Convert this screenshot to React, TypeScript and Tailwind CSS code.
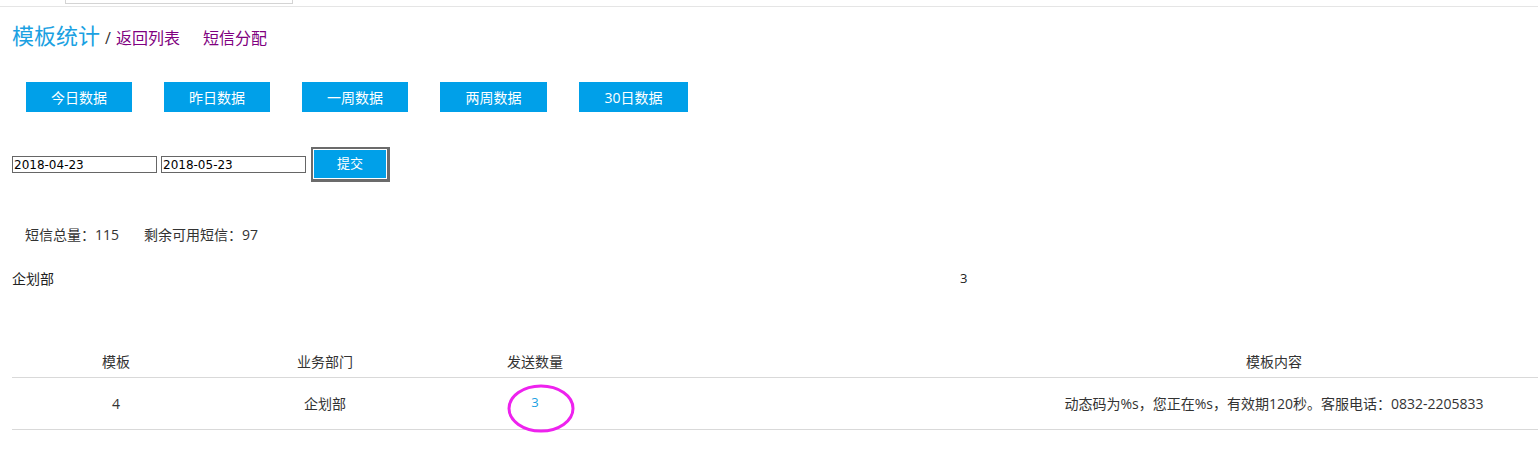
import React from 'react';

const font = { fontFamily: '"Open Sans", "Noto Sans CJK SC", sans-serif' };
const inputFont = { fontFamily: '"DejaVu Sans", sans-serif' };

const ranges = ['今日数据', '昨日数据', '一周数据', '两周数据', '30日数据'];
const btnWidths = ['w-[106px]', 'w-[106px]', 'w-[106px]', 'w-[107px]', 'w-[109px]'];

const rows = [
    { tpl: '4', dept: '企划部', count: '3', content: '动态码为%s，您正在%s，有效期120秒。客服电话：0832-2205833' },
];

export default function App() {
    return (
        <div className="w-[1538px] h-[470px] overflow-hidden bg-white text-[#333]" style={font}>
            {/* top strip */}
            <div className="h-[7px] border-b border-[#e5e5e5]">
                <div className="ml-[65px] w-[228px] h-[4px] border border-t-0 border-[#d4d4d4]" />
            </div>

            {/* title */}
            <div className="flex items-baseline pl-[12px] mt-[12px] h-[30px]">
                <span className="text-[22px] text-[#1ba1e2]">模板统计</span>
                <span className="text-[16px] text-[#333] ml-[5px] mr-[5px]">/</span>
                <a className="text-[16px] text-[#800080]">返回列表</a>
                <a className="text-[16px] text-[#800080] ml-[23px]">短信分配</a>
            </div>

            {/* quick ranges */}
            <div className="flex gap-[32px] pl-[26px] mt-[33px]">
                {ranges.map((r, i) => (
                    <button key={r} className={`${btnWidths[i]} h-[30px] bg-[#00a0e9] text-white text-[14px] flex items-center justify-center`}>
                        {r}
                    </button>
                ))}
            </div>

            {/* date form */}
            <div className="flex items-center pl-[12px] mt-[35px] h-[35px]">
                <input
                    readOnly
                    value="2018-04-23"
                    className="w-[145px] h-[17px] border border-[#666] px-[1px] text-[12px] text-black leading-none"
                    style={inputFont}
                />
                <input
                    readOnly
                    value="2018-05-23"
                    className="ml-[4px] w-[145px] h-[17px] border border-[#666] px-[1px] text-[12px] text-black leading-none"
                    style={inputFont}
                />
                <div className="ml-[5px] w-[79px] h-[35px] border-2 border-[#6b6b6b] border-b-[3px] border-r-[3px] p-[1px] bg-white">
                    <button className="w-full h-full bg-[#00a0e9] text-white text-[13px] flex items-center justify-center">提交</button>
                </div>
            </div>

            {/* totals */}
            <div className="flex pl-[25px] mt-[42px] text-[14px] text-[#333] h-[20px] items-center">
                <span>短信总量：115</span>
                <span className="ml-[25px]">剩余可用短信：97</span>
            </div>

            <div className="flex pl-[12px] mt-[24px] text-[14px] text-[#222] h-[20px] items-center">
                <span className="w-[948px]">企划部</span>
                <span className="text-[13px] pt-[1px]">3</span>
            </div>

            {/* table */}
            <div className="pl-[12px] mt-[58px]">
                <table className="w-[1896px] table-fixed border-collapse text-[14px] text-[#333]">
                    <thead>
                        <tr className="h-[31px] border-b border-[#d9d9d9]">
                            <th className="w-[208px] font-normal">模板</th>
                            <th className="w-[210px] font-normal">业务部门</th>
                            <th className="w-[210px] font-normal">发送数量</th>
                            <th className="font-normal">模板内容</th>
                        </tr>
                    </thead>
                    <tbody>
                        {rows.map(row => (
                            <tr key={row.tpl} className="h-[52px] border-b border-[#d9d9d9]">
                                <td className="text-center">{row.tpl}</td>
                                <td className="text-center">{row.dept}</td>
                                <td className="relative text-center text-[13px] text-[#1ba1e2]">
                                    {row.count}
                                    <svg className="absolute left-[77px] top-[6px]" width="68" height="49" viewBox="0 0 68 49">
                                        <ellipse cx="34" cy="24.5" rx="32" ry="22.5" fill="none" stroke="#ee22ee" strokeWidth="3" />
                                    </svg>
                                </td>
                                <td className="text-center">{row.content}</td>
                            </tr>
                        ))}
                    </tbody>
                </table>
            </div>
        </div>
    );
}
